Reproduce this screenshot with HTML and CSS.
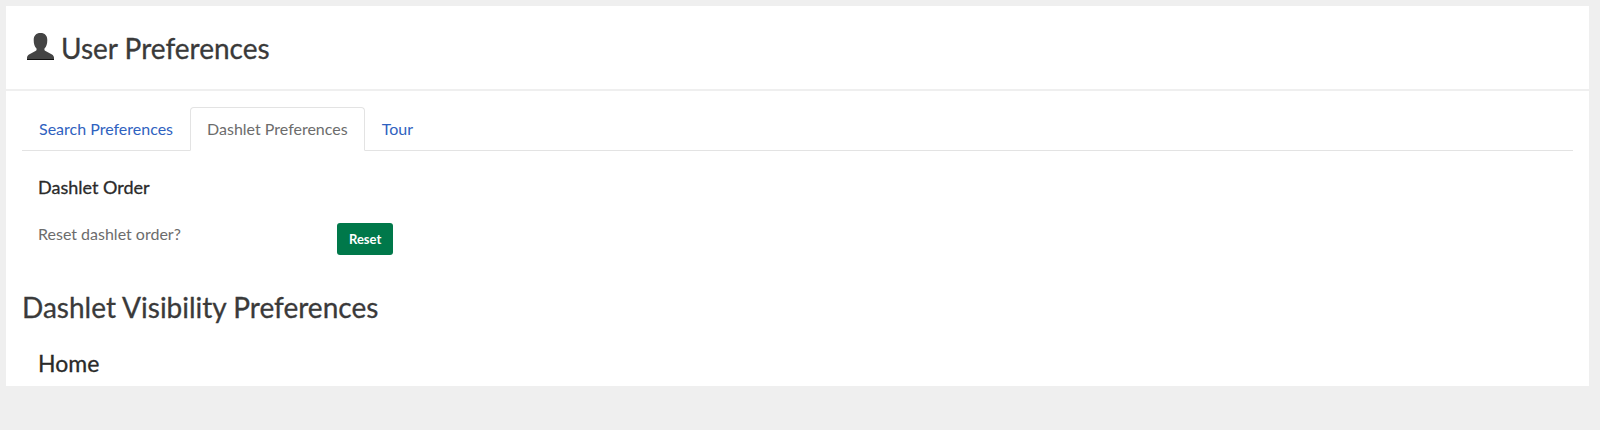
FILE: index.html
```html
<!DOCTYPE html>
<html lang="en">
<head>
<meta charset="utf-8">
<title>User Preferences</title>
<link rel="stylesheet" href="styles.css">
</head>
<body>
<main class="card">
  <header class="card-header">
    <svg class="user-icon" viewBox="0 0 27 27" aria-hidden="true">
      <path fill="#444" d="M13.500 0C18 0 20.300 2.700 20.300 7C20.300 11 19.400 13.500 17.500 15.500C17.200 17 17.500 17.600 19 18.300L25 21.500C26.500 22.500 27 23.800 27 25V27H0V25C0 23.800 .5 22.500 2 21.500L8 18.300C9.500 17.600 9.800 17 9.500 15.500C7.600 13.500 6.700 11 6.700 7C6.700 2.700 9 0 13.500 0Z"/>
      <path fill="#111" d="M0 26H27V27H0Z"/>
    </svg>
    <h1 class="title">User Preferences</h1>
  </header>
  <div class="card-body">
    <nav class="tabs">
      <a class="tab" href="#search">Search Preferences</a>
      <a class="tab tab-active" href="#dashlet" aria-current="page">Dashlet Preferences</a>
      <a class="tab" href="#tour">Tour</a>
    </nav>
    <section class="order">
      <h3 class="order-title">Dashlet Order</h3>
      <div class="order-row">
        <label class="order-label" for="reset">Reset dashlet order?</label>
        <button class="reset" id="reset" type="button">Reset</button>
      </div>
    </section>
    <h2 class="title">Dashlet Visibility Preferences</h2>
    <h3 class="group-title">Home</h3>
  </div>
</main>
</body>
</html>
```
FILE: styles.css
```css
* { box-sizing: border-box; }
body {
  margin: 0;
  padding: 6px 11px 40px 6px;
  background: #efefef;
  color: #6c6c6c;
  font: 16px/22px Lato, "Open Sans", sans-serif;
}
h1, h2, h3 { margin: 0; color: #3a3a3a; font-weight: 400; -webkit-text-stroke: 0.3px currentColor; }
.card { background: #fff; }
.card-header {
  display: flex;
  align-items: center;
  gap: 7px;
  padding: 24px 21px 23px;
  border-bottom: 2px solid #efefef;
}
.user-icon { width: 27px; height: 27px; margin-bottom: 3px; }
.title { font-size: 28px; line-height: 36px; }
.card-body { padding: 16px 16px 9px; }
.tabs { display: flex; border-bottom: 1px solid #e3e3e3; }
.tab {
  margin-bottom: -1px;
  padding: 10px 16px;
  border: 1px solid transparent;
  border-radius: 4px 4px 0 0;
  color: #2f62c0;
  text-decoration: none;
}
.tab-active { border-color: #e3e3e3 #e3e3e3 #fff; color: #6c6c6c; }
.order { padding: 24px 16px 34px; }
.order-title { font-size: 18px; line-height: 24px; color: #2a2a2a; }
.order-row { display: flex; align-items: flex-start; margin-top: 24px; }
.order-label { width: 299px; }
.reset {
  padding: 6px 12px;
  border: 0;
  border-radius: 3px;
  background: #00784a;
  color: #fff;
  font: 700 13px/20px Lato, "Open Sans", sans-serif;
}
.group-title { margin: 24px 16px 0; font-size: 23px; line-height: 28px; color: #2a2a2a; }
```
